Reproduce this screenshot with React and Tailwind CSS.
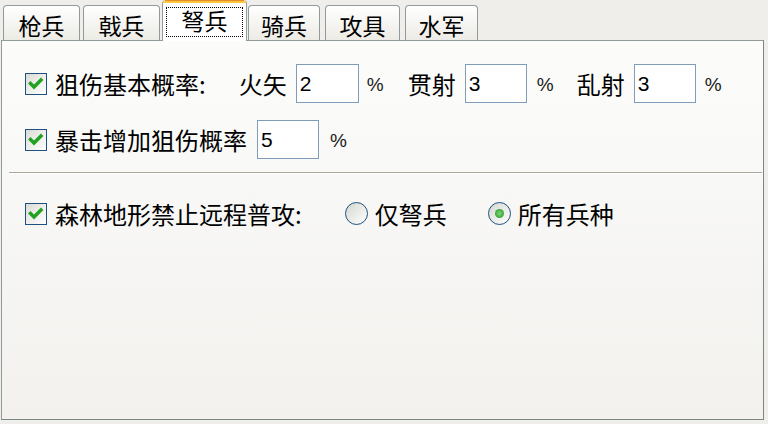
import React from "react";

const cjk = "font-['Noto_Sans_CJK_SC','Noto_Sans_CJK_JP',sans-serif]";

function Check() {
  return (
    <div className="w-[22px] h-[22px] shrink-0 border border-[#1c5180] bg-linear-to-br from-[#dcdcd6] to-white flex items-center justify-center">
      <svg width="20" height="20" viewBox="0 0 20 20">
        <path d="M4.5 9.5 L8 13 L15 6" stroke="#21a121" strokeWidth="3.4" fill="none" strokeLinecap="square" />
      </svg>
    </div>
  );
}

function Radio({ on }) {
  return (
    <div className="w-[23px] h-[23px] shrink-0 rounded-full border border-[#1c5180] bg-linear-to-br from-[#d6d6d0] to-white flex items-center justify-center">
      {on && <div className="w-[9px] h-[9px] rounded-full bg-radial from-[#7ad87a] to-[#158f15]" />}
    </div>
  );
}

function Field({ v, w = "w-[62px]", ml }) {
  return (
    <div className={`${ml} ${w} h-[39px] shrink-0 border border-[#7f9db9] bg-white flex items-center pl-[3px] text-[21px] text-black font-['Liberation_Sans',sans-serif]`}>
      {v}
    </div>
  );
}

function Pct({ ml }) {
  return (
    <span className={`${ml} w-[13px] shrink-0 pt-[2px] text-center text-[19px] text-[#1a1a1a] font-['Liberation_Sans',sans-serif] leading-none`}>%</span>
  );
}

function Tab({ label, w, ml }) {
  return (
    <div className={`${ml} ${w} h-[35px] shrink-0 rounded-t-[4px] border border-b-0 border-[#919b9c] bg-linear-to-b from-white to-[#ecebe5] flex items-center justify-center pt-[4px] text-[23px] leading-none text-black`}>
      {label}
    </div>
  );
}

export default function App() {
  return (
    <div className={`w-[768px] h-[424px] bg-[#efeeea] overflow-hidden ${cjk}`}>
      <div className="flex items-end h-[40px]">
        <Tab label="枪兵" w="w-[77px]" ml="ml-[3px]" />
        <Tab label="戟兵" w="w-[77px]" ml="ml-[3px]" />
        <div className="ml-[2px] w-[85px] h-[41px] -mb-[1px] relative z-10 shrink-0 rounded-t-[4px] border-x border-[#919b9c] bg-white flex flex-col">
          <div className="h-[1px] mx-[2px] bg-[#e68b2c]" />
          <div className="h-[2px] bg-[#ffc83c] rounded-t-[2px]" />
          <div className="flex-1 pt-[4px] px-[3px] pb-[4px] flex">
            <div className="flex-1 border border-dotted border-black flex items-center justify-center text-[23px] leading-none text-black pb-[3px]">
              弩兵
            </div>
          </div>
        </div>
        <Tab label="骑兵" w="w-[72px]" ml="ml-[1px]" />
        <Tab label="攻具" w="w-[75px]" ml="ml-[5px]" />
        <Tab label="水军" w="w-[73px]" ml="ml-[5px]" />
      </div>

      <div className="ml-[1px] w-[763px] h-[380px] border border-[#919b9c] border-r-[#7c8585] border-b-[#7c8585] bg-linear-to-b from-[#fcfcfb] to-[#f2f1ee] pl-[7px] flex flex-col text-black">
        <div className="ml-[16px] mt-[23px] h-[39px] flex items-center text-[24px] leading-none">
          <Check />
          <span className="ml-[8px]">狙伤基本概率:</span>
          <span className="ml-[33px]">火矢</span>
          <Field v="2" w="w-[63px]" ml="ml-[9px]" />
          <Pct ml="ml-[8px]" />
          <span className="ml-[28px]">贯射</span>
          <Field v="3" ml="ml-[9px]" />
          <Pct ml="ml-[10px]" />
          <span className="ml-[27px]">乱射</span>
          <Field v="3" ml="ml-[9px]" />
          <Pct ml="ml-[9px]" />
        </div>

        <div className="ml-[16px] mt-[17px] h-[39px] flex items-center text-[24px] leading-none">
          <Check />
          <span className="ml-[8px]">暴击增加狙伤概率</span>
          <Field v="5" ml="ml-[10px]" />
          <Pct ml="ml-[11px]" />
        </div>

        <div className="mt-[13px] mr-[1px] border-t border-[#aca599] border-b border-b-white" />

        <div className="ml-[16px] mt-[20px] h-[39px] flex items-center text-[24px] leading-none">
          <Check />
          <span className="ml-[8px]">森林地形禁止远程普攻:</span>
          <div className="ml-[43px]"><Radio /></div>
          <span className="ml-[7px]">仅弩兵</span>
          <div className="ml-[41px]"><Radio on /></div>
          <span className="ml-[7px]">所有兵种</span>
        </div>
      </div>
    </div>
  );
}
